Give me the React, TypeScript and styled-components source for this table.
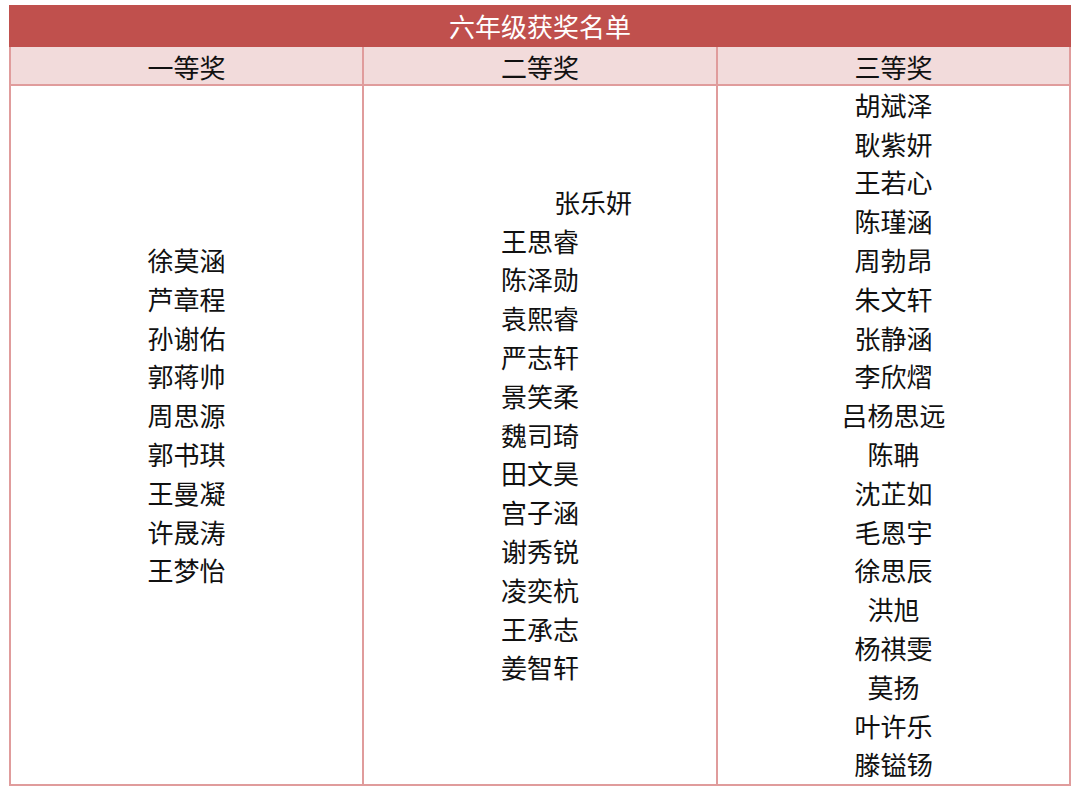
import React from "react";
import styled, { createGlobalStyle } from "styled-components";

const Global = createGlobalStyle`
  html, body { margin: 0; padding: 0; background: #ffffff; }
  body { font-family: "Noto Sans CJK SC", "Noto Sans", sans-serif; color: #111; }
`;

const Page = styled.div`
  padding: 5px 9px 0 9px;
`;

const Table = styled.div`
  width: 1062px;
  box-sizing: border-box;
`;

const TitleBar = styled.div`
  height: 42px;
  background: #c0504d;
  color: #ffffff;
  font-size: 26px;
  line-height: 42px;
  text-align: center;
`;

const Row = styled.div<{ $head?: boolean }>`
  display: grid;
  grid-template-columns: 351px 354px 353px;
  border-left: 2px solid #e09c9c;
  border-right: 2px solid #e09c9c;
  border-bottom: 2px solid #e09c9c;
  background: ${(p) => (p.$head ? "#f2dbdb" : "#ffffff")};
  box-sizing: border-box;
`;

const HeadCell = styled.div<{ $first?: boolean }>`
  height: 37px;
  line-height: 40px;
  font-size: 26px;
  text-align: center;
  border-left: ${(p) => (p.$first ? "none" : "2px solid #e09c9c")};
  box-sizing: border-box;
`;

const BodyCell = styled.div<{ $first?: boolean }>`
  height: 698px;
  display: flex;
  flex-direction: column;
  justify-content: center;
  border-left: ${(p) => (p.$first ? "none" : "2px solid #e09c9c")};
  box-sizing: border-box;
`;

const Name = styled.div<{ $indent?: number }>`
  font-size: 26px;
  line-height: 38.8px;
  height: 38.8px;
  text-align: center;
  padding-left: ${(p) => p.$indent ?? 0}px;
`;

const col1 = ["徐莫涵", "芦章程", "孙谢佑", "郭蒋帅", "周思源", "郭书琪", "王曼凝", "许晟涛", "王梦怡", ""];
const col2 = ["王思睿", "陈泽勋", "袁熙睿", "严志轩", "景笑柔", "魏司琦", "田文昊", "宫子涵", "谢秀锐", "凌奕杭", "王承志", "姜智轩"];
const col3 = ["胡斌泽", "耿紫妍", "王若心", "陈瑾涵", "周勃昂", "朱文轩", "张静涵", "李欣熠", "吕杨思远", "陈聃", "沈芷如", "毛恩宇", "徐思辰", "洪旭", "杨祺雯", "莫扬", "叶许乐", "滕镒钖"];

export default function App() {
  return (
    <>
      <Global />
      <Page>
        <Table>
          <TitleBar>六年级获奖名单</TitleBar>
          <Row $head>
            <HeadCell $first>一等奖</HeadCell>
            <HeadCell>二等奖</HeadCell>
            <HeadCell>三等奖</HeadCell>
          </Row>
          <Row>
            <BodyCell $first>
              {col1.map((n, i) => (
                <Name key={i}>{n}</Name>
              ))}
            </BodyCell>
            <BodyCell>
              <Name $indent={106}>张乐妍</Name>
              {col2.map((n, i) => (
                <Name key={i}>{n}</Name>
              ))}
            </BodyCell>
            <BodyCell>
              {col3.map((n, i) => (
                <Name key={i}>{n}</Name>
              ))}
            </BodyCell>
          </Row>
        </Table>
      </Page>
    </>
  );
}
